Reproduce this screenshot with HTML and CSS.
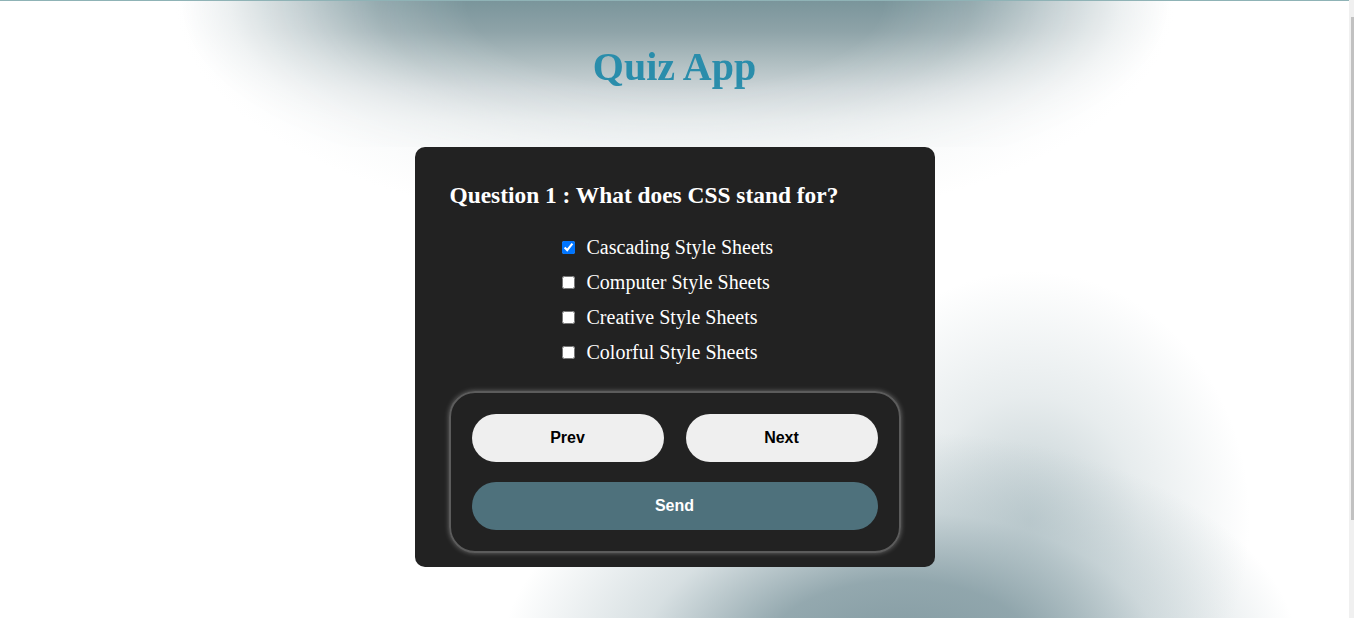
FILE: index.html
```html
<!DOCTYPE html>
<html lang="en">
<head>
<meta charset="utf-8">
<title>Quiz App</title>
<link rel="stylesheet" href="styles.css">
</head>
<body>
<main class="page">
  <header class="hero">
    <h1 class="title">Quiz App</h1>
  </header>
  <section class="card">
    <h2 class="question">Question 1 : What does CSS stand for?</h2>
    <div class="options">
      <label class="option"><input type="checkbox" checked><span>Cascading Style Sheets</span></label>
      <label class="option"><input type="checkbox"><span>Computer Style Sheets</span></label>
      <label class="option"><input type="checkbox"><span>Creative Style Sheets</span></label>
      <label class="option"><input type="checkbox"><span>Colorful Style Sheets</span></label>
    </div>
    <div class="controls">
      <div class="nav-row">
        <button class="btn btn-light" type="button">Prev</button>
        <button class="btn btn-light" type="button">Next</button>
      </div>
      <button class="btn btn-send" type="button">Send</button>
    </div>
  </section>
</main>
<div class="scrollbar"><div class="scrollbar-thumb"></div></div>
</body>
</html>
```

FILE: styles.css
```css
html,
body {
  margin: 0;
  padding: 0;
  height: 618px;
  overflow: hidden;
}

body {
  display: flex;
  font-family: "Liberation Serif", "Times New Roman", serif;
  background: #ffffff;
}

.page {
  flex: 1;
  height: 618px;
  box-sizing: border-box;
  border-top: 1px solid #8fb3b6;
  display: flex;
  flex-direction: column;
  align-items: center;
  background-color: #ffffff;
  background-image:
    radial-gradient(ellipse 400px 230px at 900px 660px, rgba(128, 152, 159, 1) 0%, rgba(136, 159, 166, 0.9) 35%, rgba(175, 192, 197, 0.5) 65%, rgba(255, 255, 255, 0) 100%),
    radial-gradient(ellipse 220px 250px at 1030px 520px, rgba(150, 172, 178, 0.6) 0%, rgba(180, 196, 200, 0.32) 50%, rgba(255, 255, 255, 0) 100%),
    radial-gradient(ellipse 500px 230px at 675px 0px, rgba(236, 240, 241, 1) 0%, rgba(240, 243, 244, 0.8) 60%, rgba(255, 255, 255, 0) 100%);
  background-repeat: no-repeat;
}

.hero {
  align-self: stretch;
  height: 146px;
  box-sizing: border-box;
  padding-top: 43px;
  display: flex;
  justify-content: center;
  background: linear-gradient(to bottom, #7a959b 0px, #8ea3a8 30px, #aebdc0 60px, #cdd5d8 90px, #e3e8e9 120px, #eef1f2 146px);
  -webkit-mask-image: radial-gradient(ellipse 495px 205px at 675px 0px, #000 0%, #000 42%, rgba(0, 0, 0, 0.78) 60%, rgba(0, 0, 0, 0.4) 76%, rgba(0, 0, 0, 0.12) 90%, transparent 100%);
  mask-image: radial-gradient(ellipse 495px 205px at 675px 0px, #000 0%, #000 42%, rgba(0, 0, 0, 0.78) 60%, rgba(0, 0, 0, 0.4) 76%, rgba(0, 0, 0, 0.12) 90%, transparent 100%);
}

.title {
  margin: 0;
  font-size: 40px;
  line-height: 46px;
  font-weight: bold;
  color: #2a8dab;
}

.card {
  width: 520px;
  box-sizing: border-box;
  padding: 35px 34px 14px;
  background: #222222;
  border-radius: 10px;
  display: flex;
  flex-direction: column;
}

.question {
  margin: 0 0 0 1px;
  font-size: 23.4px;
  line-height: 27px;
  font-weight: bold;
  color: #ffffff;
}

.options {
  margin: 21px 0 21px;
  display: flex;
  flex-direction: column;
  padding-left: 109px;
}

.option {
  height: 35px;
  display: flex;
  align-items: center;
  font-size: 20px;
  color: #ffffff;
}

.option input {
  margin: 0 12px 0 4px;
  width: 13px;
  height: 13px;
}

.controls {
  border: 2px solid #5c5c5c;
  border-radius: 26px;
  box-shadow: 0 0 5px rgba(200, 200, 200, 0.45);
  padding: 21px;
  display: flex;
  flex-direction: column;
  gap: 20px;
}

.nav-row {
  display: flex;
  gap: 22px;
}

.btn {
  height: 48px;
  border: none;
  border-radius: 24px;
  font-family: "Liberation Sans", Arial, sans-serif;
  font-size: 16px;
  font-weight: bold;
  padding: 0;
}

.btn-light {
  flex: 1;
  background: #efefef;
  color: #000000;
}

.btn-send {
  width: 100%;
  background: #4e717c;
  color: #ffffff;
}

.scrollbar {
  width: 5px;
  height: 618px;
  flex: none;
  background: #f0f0f0;
}

.scrollbar-thumb {
  margin: 17px 0 0 2px;
  width: 3px;
  height: 503px;
  background: #c1c1c1;
}
```
